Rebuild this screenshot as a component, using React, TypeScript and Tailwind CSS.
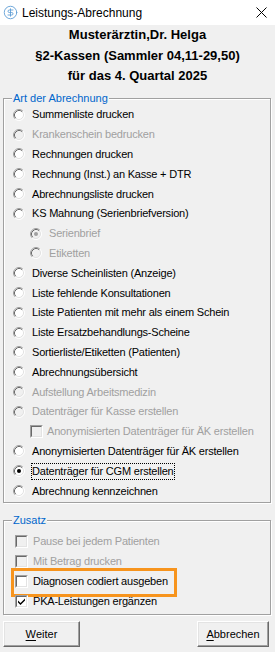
import React from 'react';
import { CircleDollarSign } from 'lucide-react';

type Item = {
  label: string;
  kind: 'radio' | 'check';
  indent?: boolean;
  disabled?: boolean;
  checked?: boolean;
  focus?: boolean;
};

const ART_ITEMS: Item[] = [
  { label: 'Summenliste drucken', kind: 'radio' },
  { label: 'Krankenschein bedrucken', kind: 'radio', disabled: true },
  { label: 'Rechnungen drucken', kind: 'radio' },
  { label: 'Rechnung (Inst.) an Kasse + DTR', kind: 'radio' },
  { label: 'Abrechnungsliste drucken', kind: 'radio' },
  { label: 'KS Mahnung (Serienbriefversion)', kind: 'radio' },
  { label: 'Serienbrief', kind: 'radio', indent: true, disabled: true, checked: true },
  { label: 'Etiketten', kind: 'radio', indent: true, disabled: true },
  { label: 'Diverse Scheinlisten (Anzeige)', kind: 'radio' },
  { label: 'Liste fehlende Konsultationen', kind: 'radio' },
  { label: 'Liste Patienten mit mehr als einem Schein', kind: 'radio' },
  { label: 'Liste Ersatzbehandlungs-Scheine', kind: 'radio' },
  { label: 'Sortierliste/Etiketten (Patienten)', kind: 'radio' },
  { label: 'Abrechnungsübersicht', kind: 'radio' },
  { label: 'Aufstellung Arbeitsmedizin', kind: 'radio', disabled: true },
  { label: 'Datenträger für Kasse erstellen', kind: 'radio', disabled: true },
  { label: 'Anonymisierten Datenträger für ÄK erstellen', kind: 'check', indent: true, disabled: true },
  { label: 'Anonymisierten Datenträger für ÄK erstellen', kind: 'radio' },
  { label: 'Datenträger für CGM erstellen', kind: 'radio', checked: true, focus: true },
  { label: 'Abrechnung kennzeichnen', kind: 'radio' },
];

const ZUSATZ_ITEMS: Item[] = [
  { label: 'Pause bei jedem Patienten', kind: 'check', disabled: true },
  { label: 'Mit Betrag drucken', kind: 'check', disabled: true },
  { label: 'Diagnosen codiert ausgeben', kind: 'check' },
  { label: 'PKA-Leistungen ergänzen', kind: 'check', checked: true },
];

function Radio({ checked, disabled }: { checked?: boolean; disabled?: boolean }) {
  return (
    <svg width="12" height="12" viewBox="0 0 12 12" className="shrink-0">
      <circle cx="6" cy="6" r="5" fill={disabled ? '#f0f0f0' : '#ffffff'} />
      <path d="M2.11 9.89 A5.5 5.5 0 0 1 9.89 2.11" fill="none" stroke="#a0a0a0" strokeWidth="1" />
      <path d="M9.89 2.11 A5.5 5.5 0 0 1 2.11 9.89" fill="none" stroke="#ffffff" strokeWidth="1" />
      <path d="M2.82 9.18 A4.5 4.5 0 0 1 9.18 2.82" fill="none" stroke="#696969" strokeWidth="1" />
      <path d="M9.18 2.82 A4.5 4.5 0 0 1 2.82 9.18" fill="none" stroke="#e3e3e3" strokeWidth="1" />
      {checked && <circle cx="6" cy="6" r="2" fill={disabled ? '#a0a0a0' : '#000000'} />}
    </svg>
  );
}

function CheckBox({ checked, disabled }: { checked?: boolean; disabled?: boolean }) {
  return (
    <span className="flex h-[13px] w-[13px] shrink-0 border border-[#a0a0a0] border-r-white border-b-white">
      <span
        className={`flex h-full w-full items-center justify-center border border-[#696969] border-r-[#e3e3e3] border-b-[#e3e3e3] ${
          disabled ? 'bg-[#f0f0f0]' : 'bg-white'
        }`}
      >
        {checked && (
          <svg width="7" height="7" viewBox="0 0 7 7">
            <polygon points="0,2.5 2.5,5 7,0.5 7,2.5 2.5,7 0,4.5" fill="#000" />
          </svg>
        )}
      </span>
    </span>
  );
}

function Row({ item, zusatz }: { item: Item; zusatz?: boolean }) {
  const pad = zusatz ? 'pl-[11px]' : item.indent ? 'pl-[26px]' : 'pl-[9px]';
  const gap = item.kind === 'check' ? (zusatz ? 'ml-[4px]' : 'ml-[3px]') : 'ml-[6px]';
  return (
    <div className={`flex h-[19.8px] items-center ${pad}`}>
      {item.kind === 'radio' ? (
        <Radio checked={item.checked} disabled={item.disabled} />
      ) : (
        <CheckBox checked={item.checked} disabled={item.disabled} />
      )}
      <span
        className={`${gap} whitespace-nowrap border px-0 leading-[15px] tracking-[-0.2px] ${
          item.focus ? 'border-dotted border-black' : 'border-transparent'
        } ${item.disabled ? 'text-[#a0a0a0]' : 'text-black'}`}
      >
        {item.label}
      </span>
    </div>
  );
}

function Group({ title, children, className }: { title: string; children: React.ReactNode; className: string }) {
  return (
    <div
      className={`relative mx-[3px] w-[268px] border border-[#a0a0a0] shadow-[1px_1px_0_#ffffff,inset_1px_1px_0_#ffffff] ${className}`}
    >
      <span className="absolute -top-[8px] left-[8px] bg-[#f0f0f0] px-[1px] leading-[14px] text-[#0066cc]">{title}</span>
      {children}
    </div>
  );
}

function Button({ first, rest, className }: { first: string; rest: string; className: string }) {
  return (
    <button
      className={`flex h-[26px] items-center justify-center border border-white border-r-[#696969] border-b-[#696969] bg-[#f0f0f0] shadow-[inset_-1px_-1px_0_#a0a0a0,inset_1px_1px_0_#e3e3e3] ${className}`}
    >
      <span className="underline underline-offset-2">{first}</span>
      {rest}
    </button>
  );
}

export default function App() {
  return (
    <div className="flex h-[652px] w-[275px] flex-col bg-[#f0f0f0] font-['Liberation_Sans',Arial,sans-serif] text-[11px] text-black">
      <div className="flex h-[25px] shrink-0 items-center bg-white">
        <CircleDollarSign size={15} strokeWidth={1.4} color="#5b9bd5" className="ml-[3px]" />
        <span className="ml-[4px] text-[12px]">Leistungs-Abrechnung</span>
        <svg width="11" height="11" viewBox="0 0 11 11" className="ml-auto mr-[8px]">
          <path d="M0.5 0.5 L10.5 10.5 M10.5 0.5 L0.5 10.5" stroke="#000" strokeWidth="1" />
        </svg>
      </div>

      <div className="flex flex-col items-center text-[13px] font-bold leading-[20.5px]">
        <span>Musterärztin,Dr. Helga</span>
        <span>§2-Kassen (Sammler 04,11-29,50)</span>
        <span>für das 4. Quartal 2025</span>
      </div>

      <Group title="Art der Abrechnung" className="mt-[11.5px] pt-[6px] pb-[1px]">
        {ART_ITEMS.map((item, i) => (
          <Row key={i} item={item} />
        ))}
      </Group>

      <Group title="Zusatz" className="mt-[17px] pt-[10.8px] pb-[3px]">
        {ZUSATZ_ITEMS.map((item, i) => (
          <div key={i} className="relative">
            <Row item={item} zusatz />
            {item.label.startsWith('Diagnosen') && (
              <div className="pointer-events-none absolute -top-[3.4px] left-[7px] h-[29px] w-[166px] border-[3px] border-[#f7941d]" />
            )}
          </div>
        ))}
      </Group>

      <div className="mt-[6px] flex justify-between pl-[3px] pr-[6px]">
        <Button first="W" rest="eiter" className="w-[77px]" />
        <Button first="A" rest="bbrechen" className="w-[72px]" />
      </div>
    </div>
  );
}
